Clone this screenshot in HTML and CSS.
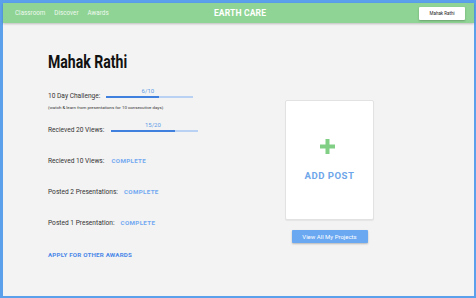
FILE: index.html
```html
<!DOCTYPE html>
<html>
<head>
<meta charset="utf-8">
<link rel="stylesheet" href="styles.css">
</head>
<body>
<div class="frame">
  <header class="nav">
    <nav class="links">
      <a>Classroom</a>
      <a>Discover</a>
      <a>Awards</a>
    </nav>
    <div class="brand">EARTH CARE</div>
    <div class="nav-right"><button class="user-btn">Mahak Rathi</button></div>
  </header>
  <main class="main">
    <section class="left">
      <h1 class="name">Mahak Rathi</h1>
      <div class="row r1">
        <span class="label">10 Day Challenge:</span>
        <div class="progress">
          <div class="count">6/10</div>
          <div class="track"><div class="fill" style="width:61%"></div></div>
        </div>
      </div>
      <div class="sub">(watch &amp; learn from presentations for 10 consecutive days)</div>
      <div class="row r2">
        <span class="label">Recieved 20 Views:</span>
        <div class="progress">
          <div class="count">15/20</div>
          <div class="track"><div class="fill" style="width:73%"></div></div>
        </div>
      </div>
      <div class="row r3">
        <span class="label">Recieved 10 Views:</span>
        <span class="done">COMPLETE</span>
      </div>
      <div class="row r4">
        <span class="label">Posted 2 Presentations:</span>
        <span class="done">COMPLETE</span>
      </div>
      <div class="row r5">
        <span class="label">Posted 1 Presentation:</span>
        <span class="done">COMPLETE</span>
      </div>
      <div class="row r6">
        <a class="apply">APPLY FOR OTHER AWARDS</a>
      </div>
    </section>
    <section class="right">
      <div class="card">
        <svg class="plus" width="15" height="15" viewBox="0 0 15 15"><rect x="5.5" y="0" width="4" height="15" fill="#80cf84"/><rect x="0" y="5.5" width="15" height="4" fill="#80cf84"/></svg>
        <div class="add">ADD POST</div>
      </div>
      <button class="projects">View All My Projects</button>
    </section>
  </main>
</div>
</body>
</html>
```
FILE: styles.css
```css
* { box-sizing: border-box; }
html, body { margin: 0; padding: 0; }
body {
  width: 476px;
  height: 298px;
  font-family: Roboto, "Liberation Sans", sans-serif;
  background: #f3f3f3;
}
.frame {
  width: 476px;
  height: 298px;
  border-style: solid;
  border-color: #5ba0ea;
  border-width: 3px 2px 2px 3px;
  background: #f3f3f3;
  display: flex;
  flex-direction: column;
}
.nav {
  height: 20px;
  background: #8fd494;
  box-shadow: 0 1px 2px rgba(0,0,0,0.22);
  display: flex;
  align-items: center;
  position: relative;
  z-index: 1;
}
.links {
  flex: 1;
  display: flex;
  gap: 9px;
  padding-left: 12px;
}
.links a {
  color: #eef8ef;
  font-size: 6.3px;
}
.brand {
  color: #ffffff;
  font-weight: bold;
  font-size: 8.6px;
  letter-spacing: 0.1px;
}
.nav-right {
  flex: 1;
  display: flex;
  justify-content: flex-end;
  padding-right: 9px;
}
.user-btn {
  width: 46px;
  height: 13px;
  border: none;
  border-radius: 1px;
  background: #ffffff;
  box-shadow: 0 1px 2px rgba(0,0,0,0.25);
  font-family: Roboto, sans-serif;
  font-size: 4.5px;
  color: #222;
  padding: 0;
}
.main {
  flex: 1;
  display: flex;
  padding-left: 45px;
}
.left {
  width: 237px;
  display: flex;
  flex-direction: column;
  padding-top: 29px;
}
.name {
  margin: 0;
  font-size: 19px;
  line-height: 20px;
  height: 20px;
  font-weight: bold;
  color: #111;
  display: inline-block;
  transform: scaleX(0.74);
  transform-origin: left center;
  white-space: nowrap;
}
.row {
  display: flex;
  align-items: center;
  height: 14px;
  gap: 6px;
}
.r1 { margin-top: 17px; }
.r2 { margin-top: 12px; gap: 7px; }
.r3 { margin-top: 17px; gap: 7px; }
.r4 { margin-top: 17px; }
.r5 { margin-top: 17px; }
.r6 { margin-top: 18px; }
.label {
  font-size: 6.6px;
  color: #333;
  white-space: nowrap;
}
.sub {
  margin-top: 2px;
  font-size: 4.4px;
  line-height: 6px;
  color: #333;
}
.progress {
  width: 87px;
  display: flex;
  flex-direction: column;
  padding-bottom: 9px;
  margin-top: 2px;
}
.count {
  text-align: center;
  font-size: 6px;
  line-height: 7px;
  color: #5f9be6;
  margin-bottom: 2px;
  padding-right: 4px;
}
.track {
  height: 2.5px;
  background: #b9d2f3;
}
.fill {
  height: 100%;
  background: #3f80df;
}
.done {
  font-size: 6.2px;
  font-weight: bold;
  color: #72a9f1;
  letter-spacing: 0.35px;
}
.apply {
  font-size: 6.2px;
  font-weight: bold;
  color: #4a87e9;
  letter-spacing: 0.2px;
}
.right {
  width: 89px;
  display: flex;
  flex-direction: column;
  align-items: center;
  padding-top: 77px;
}
.card {
  width: 89px;
  height: 120px;
  background: #ffffff;
  border: 1px solid #e2e2e2;
  border-radius: 2px;
  box-shadow: 0 1px 1px rgba(0,0,0,0.06);
  display: flex;
  flex-direction: column;
  align-items: center;
  justify-content: center;
  gap: 17px;
  padding-bottom: 1px;
}
.plus { display: block; margin-right: 4px; }
.add {
  font-size: 9.6px;
  font-weight: bold;
  color: #6ea6ea;
  letter-spacing: 0.5px;
  line-height: 10px;
}
.projects {
  margin-top: 10px;
  width: 76px;
  height: 13px;
  border: none;
  border-radius: 1px;
  background: #6aa8f2;
  box-shadow: 0 1px 2px rgba(0,0,0,0.25);
  color: #ffffff;
  font-family: Roboto, sans-serif;
  font-size: 6px;
  padding: 0;
}
```
